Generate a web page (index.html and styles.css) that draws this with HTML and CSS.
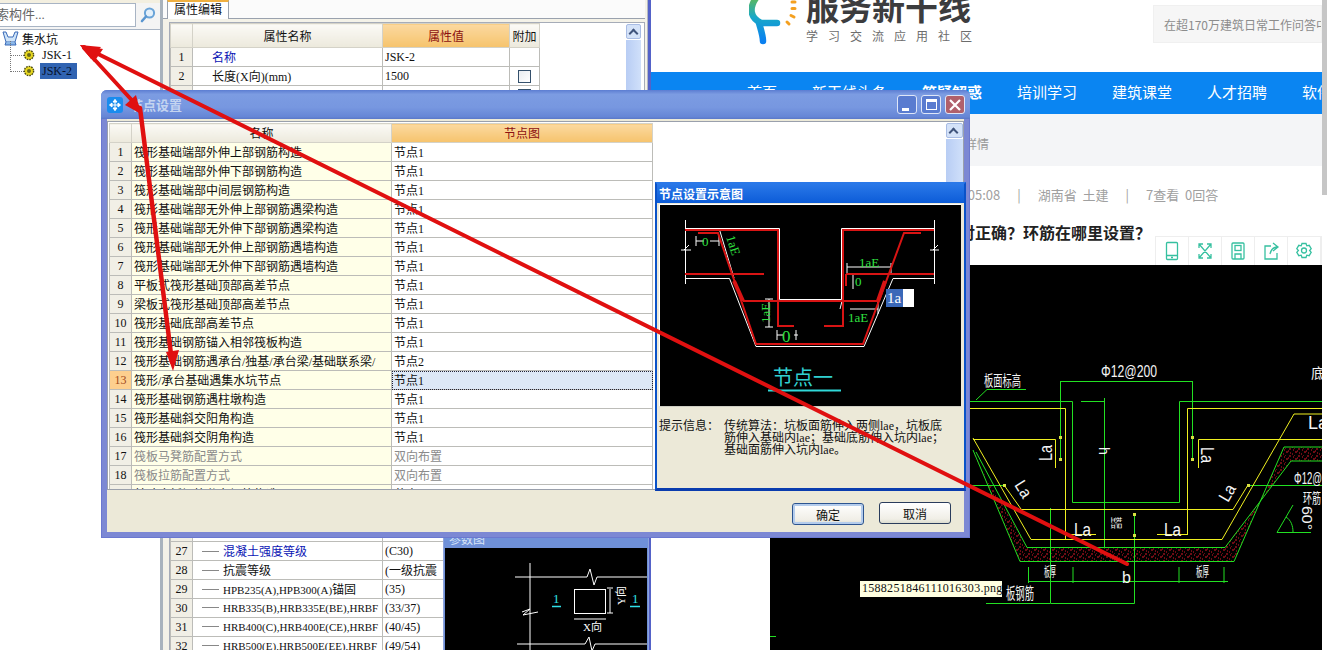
FILE: index.html
```html
<!DOCTYPE html>
<html lang="zh-CN">
<head>
<meta charset="utf-8">
<title>节点设置</title>
<link rel="stylesheet" href="styles.css">
</head>
<body>
<div class="desktop">

  <aside class="tree-panel">
    <div class="search">
      <div class="search-input">搜索构件...</div>
      <div class="search-btn">
        <svg width="18" height="18" viewBox="0 0 18 18"><circle cx="10.5" cy="7" r="4.6" fill="#e4f0fa" stroke="#6aa4d8" stroke-width="2"/><path d="M7 10.5 3 15" stroke="#5a96d0" stroke-width="2.6" stroke-linecap="round"/></svg>
      </div>
    </div>
    <ul class="tree">
      <li class="tree-root">
        <svg width="17" height="15" viewBox="0 0 17 15"><path d="M1 1h3l2 5h5l2-5h3l-3 10H4z" fill="#cfe4f8" stroke="#3a6ab8"/><path d="M4 11 3 14h11l-1-3" fill="#8cb8e8" stroke="#3a6ab8"/></svg>
        <span>集水坑</span>
      </li>
      <li class="tree-leaf">
        <svg class="gear" width="12" height="12" viewBox="0 0 12 12"><circle cx="6" cy="6" r="4.6" fill="#e8d820" stroke="#4a4a10" stroke-width="1.4" stroke-dasharray="1.6 1"/><circle cx="6" cy="6" r="2" fill="#6a6a18"/></svg>
        <span class="leaf-label">JSK-1</span>
      </li>
      <li class="tree-leaf">
        <svg class="gear" width="12" height="12" viewBox="0 0 12 12"><circle cx="6" cy="6" r="4.6" fill="#e8d820" stroke="#4a4a10" stroke-width="1.4" stroke-dasharray="1.6 1"/><circle cx="6" cy="6" r="2" fill="#6a6a18"/></svg>
        <span class="leaf-label leaf-selected">JSK-2</span>
      </li>
    </ul>
  </aside>

  <div class="splitter"></div>

  <section class="props">
    <div class="tab-strip"><div class="tab">属性编辑</div></div>
    <div class="props-frame">
      <table class="grid prop-grid">
        <colgroup><col class="c-no"><col class="c-name"><col class="c-val"><col class="c-add"></colgroup>
        <tr class="head"><th></th><th>属性名称</th><th class="active">属性值</th><th>附加</th></tr>
        <tr><td class="no">1</td><td class="pn link">名称</td><td>JSK-2</td><td></td></tr>
        <tr><td class="no">2</td><td class="pn">长度(X向)(mm)</td><td>1500</td><td class="chk"><i class="box"></i></td></tr>
        <tr><td class="no">3</td><td class="pn"></td><td></td><td class="chk"><i class="box"></i></td></tr>
        <tr class="hidden-rows"><td class="no"></td><td></td><td></td><td></td></tr>
        <tr><td class="no">27</td><td class="sub link"><b class="dash"></b>混凝土强度等级</td><td>(C30)</td><td></td></tr>
        <tr><td class="no">28</td><td class="sub"><b class="dash"></b>抗震等级</td><td>(一级抗震</td><td></td></tr>
        <tr><td class="no">29</td><td class="sub"><b class="dash"></b><span class="tight">HPB235(A),HPB300(A)</span>锚固</td><td>(35)</td><td></td></tr>
        <tr><td class="no">30</td><td class="sub"><b class="dash"></b><span class="tight">HRB335(B),HRB335E(BE),HRBF</span></td><td>(33/37)</td><td></td></tr>
        <tr><td class="no">31</td><td class="sub"><b class="dash"></b><span class="tight">HRB400(C),HRB400E(CE),HRBF</span></td><td>(40/45)</td><td></td></tr>
        <tr><td class="no">32</td><td class="sub"><b class="dash"></b><span class="tight">HRB500(E),HRB500E(EE),HRBF</span></td><td>(49/54)</td><td></td></tr>
      </table>
      <div class="prop-scroll"><div class="scroll-up"></div><div class="scroll-track"></div></div>
    </div>
    <div class="param-panel">
      <div class="param-title">参数图</div>
      <svg class="param-cad" viewBox="445 547 202 103" width="202" height="103">
        <g stroke="#fff" fill="none">
          <path d="M515 576H587L590 568 594 584 597 576H647M530 562V650M517 643H585L589 636 592 650 595 643H647"/>
          <path d="M522 611 530 608 523 614 538 611"/>
          <rect x="574.500" y="588.500" width="31" height="24"/>
          <path d="M574 618H606M610 588V612M607 587H613M607 612H613"/>
        </g>
        <g font-family="'Liberation Serif','Noto Sans CJK SC',serif" font-size="11" fill="#fff">
          <text x="583" y="630">X向</text>
          <text transform="translate(625 604) rotate(-90)">Y向</text>
        </g>
        <g fill="#30e0e8" font-family="'Liberation Serif',serif" font-size="13">
          <text x="553" y="602">1</text>
          <text x="632" y="602">1</text>
        </g>
        <path d="M552 605.500H561M630 605.500H640" stroke="#30e0e8" stroke-width="1.500"/>
      </svg>
    </div>
  </section>

  <div class="edge-strip"></div>

  <main class="browser">
    <header class="site-head">
      <div class="logo">
        <svg class="logo-mark" width="48" height="48" viewBox="0 0 48 48">
          <defs><linearGradient id="lg" x1="0" y1="0" x2="0" y2="1"><stop offset="0" stop-color="#5cb85c"/><stop offset=".45" stop-color="#18a8c8"/><stop offset="1" stop-color="#0a80f0"/></linearGradient></defs>
          <path d="M7 -2C0 8 1 18 12 23H28M10 23C12 30 14 36 14 41" fill="none" stroke="url(#lg)" stroke-width="6.500" stroke-linecap="round"/>
          <g stroke="#f4a020" stroke-width="3" stroke-linecap="round"><path d="M43 2h3M43 8.500h3M42 15.500l3 1.500M38 22l2 2"/></g>
        </svg>
        <div class="logo-text">
          <div class="logo-name">服务新干线</div>
          <div class="logo-sub">学习交流应用社区</div>
        </div>
      </div>
      <div class="site-search">在超170万建筑日常工作问答中</div>
    </header>
    <nav class="site-nav">
      <span>首页</span><span>新干线头条</span><span class="nav-on">答疑解惑</span><span>培训学习</span><span>建筑课堂</span><span>人才招聘</span><span>软件</span>
    </nav>
    <div class="crumbs">问题详情</div>
    <div class="article">
      <div class="meta"><span>2020-04-30 10:05:08</span><em>|</em><span>湖南省&nbsp;&nbsp;土建</span><em>|</em><span>7查看&nbsp;&nbsp;0回答</span></div>
      <div class="title-row">
        <h1 class="q-title">集水坑这样设置节点对正确？环筋在哪里设置？</h1>
      </div>
      <div class="tools-row">
        <div class="tools">
          <div class="tool"><svg width="18" height="20" viewBox="0 0 18 20" class="ti"><rect x="3.500" y="1.500" width="11" height="17" rx="1"/><path d="M3.500 14.500h11M8 16.500h2"/></svg></div>
          <div class="tool"><svg width="18" height="20" viewBox="0 0 18 20" class="ti"><path d="M3 3l12 14M15 3 3 17M3 7V3h4M11 3h4v4M3 13v4h4M15 13v4h-4"/></svg></div>
          <div class="tool"><svg width="18" height="20" viewBox="0 0 18 20" class="ti"><rect x="3" y="2" width="12" height="16" rx="1"/><rect x="6" y="4.500" width="6" height="5"/><path d="M6 18v-5h6v5"/></svg></div>
          <div class="tool"><svg width="18" height="20" viewBox="0 0 18 20" class="ti"><path d="M9 5H3v13h12v-6M11 2l5 4-5 4M16 6c-5 0-7 2-8 7"/></svg></div>
          <div class="tool"><svg width="18" height="20" viewBox="0 0 18 20" class="ti"><path d="M7 2.500h4l.8 2.300 2.400-.5 2 3.400-1.600 1.800 1.600 1.800-2 3.400-2.400-.5-.8 2.300H7l-.8-2.300-2.400.5-2-3.400L3.400 9.500 1.800 7.700l2-3.400 2.400.5z"/><circle cx="9" cy="9.500" r="2.500"/></svg></div>
        </div>
      </div>
      <div class="drawing-row">
        <svg class="drawing" viewBox="769 265 552 385" width="552" height="385">
          <defs>
            <pattern id="dots" width="9" height="7" patternUnits="userSpaceOnUse">
              <path d="M1 1h2M5 2h1M7 4h2M2 5h1M4 6h1M0 3h1M6 0h1" stroke="#d81828" stroke-width="1.200"/>
            </pattern>
          </defs>
          <path d="M972 450 1019 561H1233L1283 447H1321V461H1290L1224 547H1026L975 460Z" fill="url(#dots)"/>
          <g fill="none" stroke="#22e022">
            <path d="M1059 381.500H1191.500M1059.500 381V460M1191.500 381V460"/>
            <path d="M969 401.500H1071.500V502.500H1178.500V401.500H1321M1080 401.500H1103"/>
            <path d="M972 450 1019 561.500H1233L1283 447H1321M975 452 1026 547.500H1224L1290 461H1321"/>
            <path d="M975 400 986 389.500H1025M1103.500 398V548M1049.500 508V603.500H1133.500V513M985 603.500H1049M1027 581.500H1227"/>
            <path d="M1027.500 567V583M1072 567V583M1178 567V583M1223 567V583"/>
            <path d="M969 485.500H1003M1247 485.500H1321M1276 532.500H1310M1276 532.500 1292 505M1285 517C1290 520 1292 526 1292 532M769 636.500H775"/>
          </g>
          <g fill="none" stroke="#f0f020">
            <path d="M969 408.500H1064.500V539M1186.500 534V408.500H1321M972 439.500H1054.500V468M1321 439.500H1197.500V468"/>
            <path d="M972 438 1030 539.500H1221L1293 414H1321M1013 509.500H1232L1247 485M1003 485 1020 509"/>
            <path d="M1065 534.500H1095M1156 534.500H1187"/>
          </g>
          <g fill="#d8e040">
            <rect x="1058" y="436" width="3" height="3"/><rect x="1058" y="458" width="3" height="3"/>
            <rect x="1190" y="436" width="3" height="3"/><rect x="1190" y="458" width="3" height="3"/>
            <rect x="1002" y="484" width="3" height="3"/><rect x="1246" y="484" width="3" height="3"/>
            <rect x="1132" y="513" width="3" height="3"/><rect x="1132" y="534" width="3" height="3"/>
          </g>
          <g class="cad-text">
            <text x="1100" y="377" font-size="17" textLength="56" lengthAdjust="spacingAndGlyphs">Φ12@200</text>
            <text x="983" y="386" font-size="15" textLength="37" lengthAdjust="spacingAndGlyphs">板面标高</text>
            <text x="1073" y="536" font-size="18" textLength="17" lengthAdjust="spacingAndGlyphs">La</text>
            <text x="1163" y="536" font-size="18" textLength="17" lengthAdjust="spacingAndGlyphs">La</text>
            <text x="1307" y="429" font-size="18">La</text>
            <text transform="translate(1051 461) rotate(-90)" font-size="18" textLength="16" lengthAdjust="spacingAndGlyphs">La</text>
            <text transform="translate(1200 447) rotate(90)" font-size="18" textLength="16" lengthAdjust="spacingAndGlyphs">La</text>
            <text transform="translate(1013 485) rotate(58)" font-size="17" textLength="17" lengthAdjust="spacingAndGlyphs">La</text>
            <text transform="translate(1227 503) rotate(-60)" font-size="17" textLength="17" lengthAdjust="spacingAndGlyphs">La</text>
            <text x="1121" y="583" font-size="16">b</text>
            <text x="1043" y="576" font-size="13" textLength="12" lengthAdjust="spacingAndGlyphs">板厚</text>
            <text x="1195" y="576" font-size="13" textLength="13" lengthAdjust="spacingAndGlyphs">板厚</text>
            <text transform="translate(1111 517) rotate(90)" font-size="11" textLength="12" lengthAdjust="spacingAndGlyphs">垫层</text>
            <text transform="translate(1098 447) rotate(90)" font-size="14">h</text>
            <text x="1005" y="599" font-size="16" textLength="28" lengthAdjust="spacingAndGlyphs">板钢筋</text>
            <text x="1293" y="484" font-size="16" textLength="28" lengthAdjust="spacingAndGlyphs">Φ12@</text>
            <text x="1302" y="503" font-size="14" textLength="18" lengthAdjust="spacingAndGlyphs">环筋</text>
            <text x="1310" y="378" font-size="14">底</text>
            <text transform="translate(1301 506) rotate(90)" font-size="14" textLength="24" lengthAdjust="spacingAndGlyphs">60°</text>
          </g>
        </svg>
      </div>
    </div>
  </main>
  <div class="page-scroll"><div class="page-thumb"></div></div>

  <section class="dialog">
    <header class="dlg-title">
      <svg class="dlg-icon" width="16" height="16" viewBox="0 0 16 16"><rect width="16" height="16" rx="3" fill="#1a8cee"/><path d="M8 2.500v11M3 8h10M8 2.500 6 5h4zM8 13.500 6 11h4zM2.500 8 5 6v4zM13.500 8 11 6v4z" stroke="#fff" fill="#fff" stroke-width="1"/></svg>
      <span class="dlg-name">节点设置</span>
      <div class="win-btns">
        <div class="win-btn"><i class="g-min"></i></div>
        <div class="win-btn"><i class="g-max"></i></div>
        <div class="win-btn win-close">
          <svg width="12" height="12" viewBox="0 0 12 12"><path d="M1 1 11 11M11 1 1 11" stroke="#fff" stroke-width="2.200"/></svg>
        </div>
      </div>
    </header>
    <div class="dlg-body">
      <div class="node-frame">
        <table class="grid node-grid">
          <colgroup><col class="n-no"><col class="n-name"><col class="n-val"></colgroup>
          <tr class="head"><th></th><th>名称</th><th class="active">节点图</th></tr>
          <tr><td class="no">1</td><td class="nm">筏形基础端部外伸上部钢筋构造</td><td>节点1</td></tr>
          <tr><td class="no">2</td><td class="nm">筏形基础端部外伸下部钢筋构造</td><td>节点1</td></tr>
          <tr><td class="no">3</td><td class="nm">筏形基础端部中间层钢筋构造</td><td>节点1</td></tr>
          <tr><td class="no">4</td><td class="nm">筏形基础端部无外伸上部钢筋遇梁构造</td><td>节点1</td></tr>
          <tr><td class="no">5</td><td class="nm">筏形基础端部无外伸下部钢筋遇梁构造</td><td>节点1</td></tr>
          <tr><td class="no">6</td><td class="nm">筏形基础端部无外伸上部钢筋遇墙构造</td><td>节点1</td></tr>
          <tr><td class="no">7</td><td class="nm">筏形基础端部无外伸下部钢筋遇墙构造</td><td>节点1</td></tr>
          <tr><td class="no">8</td><td class="nm">平板式筏形基础顶部高差节点</td><td>节点1</td></tr>
          <tr><td class="no">9</td><td class="nm">梁板式筏形基础顶部高差节点</td><td>节点1</td></tr>
          <tr><td class="no">10</td><td class="nm">筏形基础底部高差节点</td><td>节点1</td></tr>
          <tr><td class="no">11</td><td class="nm">筏形基础钢筋锚入相邻筏板构造</td><td>节点1</td></tr>
          <tr><td class="no">12</td><td class="nm">筏形基础钢筋遇承台/独基/承台梁/基础联系梁/</td><td>节点2</td></tr>
          <tr class="sel"><td class="no">13</td><td class="nm">筏形/承台基础遇集水坑节点</td><td>节点1</td></tr>
          <tr><td class="no">14</td><td class="nm">筏形基础钢筋遇柱墩构造</td><td>节点1</td></tr>
          <tr><td class="no">15</td><td class="nm">筏形基础斜交阳角构造</td><td>节点1</td></tr>
          <tr><td class="no">16</td><td class="nm">筏形基础斜交阴角构造</td><td>节点1</td></tr>
          <tr class="off"><td class="no">17</td><td class="nm">筏板马凳筋配置方式</td><td>双向布置</td></tr>
          <tr class="off"><td class="no">18</td><td class="nm">筏板拉筋配置方式</td><td>双向布置</td></tr>
          <tr><td class="no">19</td><td class="nm">基础底板钢筋分布钢筋构造</td><td>节点1</td></tr>
        </table>
        <div class="node-scroll"><div class="scroll-up"></div><div class="scroll-track"></div></div>
      </div>

      <div class="hint-panel">
        <div class="hint-title">节点设置示意图</div>
        <div class="hint-pic">
          <svg viewBox="659 204 301 201" width="301" height="201">
            <g fill="none" stroke="#fff">
              <path d="M684.500 219V283M933.500 219V283"/>
              <path d="M684 227.500H778.500V298.500H840.500V227.500H933M684 277.500H728.500L755 345.500H863L892 277.500H933M718 227 733 277"/>
              <path d="M680 249H690M929 249H938M683 249 688 244M932 249 937 244"/>
              <path d="M695 240H703M709 240H718M695 235V245M718 235V245"/>
              <path d="M846 266H890M846 262V272M890 262V272M849 308H877M839 308 841 300M877 300V313"/>
              <path d="M768 298V326M764 298H772M764 326H772M776 334H782M793 334H797M776 329V339M795 329V339M852 274V288"/>
            </g>
            <g fill="none" stroke="#d81414" stroke-width="2">
              <path d="M684 229H777V325H793M697 232H717L755 343H862L903 232H920M684 273H763M742 300H877M842 229H933M842 228V325H823M845 273H933M845 273V285"/>
            </g>
            <path d="M733 280 742 300M877 300 884 280" stroke="#d81414" stroke-width="4"/>
            <g class="mini-green">
              <text transform="translate(725 236) rotate(72)">1aE</text>
              <text x="701" y="245">0</text>
              <text x="858" y="266">1aE</text>
              <text x="854" y="285">0</text>
              <text transform="translate(769 322) rotate(-90)">1aE</text>
              <text x="781" y="341" font-size="17">0</text>
              <text x="847" y="321">1aE</text>
            </g>
            <rect x="885" y="288" width="28" height="18" fill="#fff"/>
            <rect x="885" y="288" width="17" height="18" fill="#3a68b8"/>
            <text x="886" y="302" fill="#fff" font-family="'Liberation Serif',serif" font-size="15">1a</text>
            <text x="772" y="384" fill="#30d0d0" font-family="'Noto Sans CJK SC',sans-serif" font-size="20">节点一</text>
            <path d="M767 389.500H840" stroke="#30d8d8" stroke-width="2"/>
          </svg>
        </div>
        <div class="hint-info">
          <span class="hint-label">提示信息：</span>
          <p class="hint-copy">传统算法：坑板面筋伸入两侧lae，坑板底筋伸入基础内lae；基础底筋伸入坑内lae；基础面筋伸入坑内lae。</p>
        </div>
      </div>

      <div class="dlg-actions">
        <button class="btn btn-default">确定</button>
        <button class="btn">取消</button>
      </div>
    </div>
  </section>

  <svg class="arrows" viewBox="0 0 1327 650" width="1327" height="650">
    <g stroke="#e01010" stroke-width="4" fill="none" stroke-linecap="round">
      <path d="M84 47 1127 564"/>
      <path d="M84 48 139 108"/>
      <path d="M140 108 172 362" stroke-width="4.500"/>
    </g>
    <g fill="#e01010">
      <path d="M80 45 103 49 94 62Z"/>
      <path d="M80 45 101 47 91 59Z"/>
      <path d="M141 114 125 105 136 95Z"/>
      <path d="M173 371 166 352 179 350Z"/>
    </g>
  </svg>

  <div class="tooltip">1588251846111016303.png</div>
</div>
</body>
</html>
```

FILE: styles.css
```css
* { box-sizing: border-box; }
html, body { margin: 0; padding: 0; background: #fff; }
body {
  font-family: "Liberation Serif", "Noto Sans CJK SC", serif;
  font-size: 12px;
  color: #111;
}
.desktop {
  position: relative;
  display: flex;
  width: 1327px;
  height: 650px;
  overflow: hidden;
}

/* component tree */
.tree-panel { flex: 0 0 160px; background: #fff; }
.search {
  display: flex;
  height: 30px;
  padding-top: 3px;
  background: linear-gradient(#f3efe0 0, #f3efe0 3px, #f4f4f4 3px);
  border-bottom: 1px solid #a8b4c4;
}
.search-input {
  width: 136px;
  height: 24px;
  line-height: 22px;
  text-indent: -17px;
  color: #666;
  font-size: 13px;
  background: #fff;
  border: 1px solid #a8b4c4;
  border-left: 0;
  overflow: hidden;
  white-space: nowrap;
}
.search-btn { display: flex; align-items: center; justify-content: center; width: 24px; height: 24px; }
.tree { list-style: none; margin: 0; padding: 0; }
.tree-root { display: flex; align-items: center; gap: 3px; height: 17px; padding-left: 2px; }
.tree-leaf {
  position: relative;
  display: flex;
  align-items: center;
  height: 16px;
  padding-left: 23px;
}
.tree-leaf::before {
  content: "";
  position: absolute;
  left: 10px;
  top: -6px;
  width: 13px;
  height: 14px;
  border-left: 1px dotted #777;
  border-bottom: 1px dotted #777;
}
.gear { flex: none; margin-right: 5px; position: relative; }
.leaf-label { display: block; padding: 0 2px; height: 16px; line-height: 16px; width: 37px; }
.leaf-selected { background: #3164b2; color: #06122c; }

/* splitter + property window */
.splitter { flex: 0 0 3px; background: #a9b3bd; }
.props {
  position: relative;
  flex: 0 0 485px;
  display: flex;
  flex-direction: column;
  padding: 0 2px 0 0;
  background: #f4f2e8;
  border-right: 1px solid #b4b8c4;
}
.tab-strip { height: 19px; padding-left: 4px; background: #fbfbfb; border-bottom: 1px solid #9aa2ae; }
.tab {
  width: 62px;
  height: 19px;
  line-height: 16px;
  text-align: center;
  background: #fff;
  border: 1px solid #9aa2ae;
  border-top: 2px solid #f0b040;
  border-bottom: 0;
}
.props-frame {
  display: flex;
  flex: 1;
  margin: 3px 0 0 6px;
  background: #fff;
  border: 1px solid #a6acb8;
  border-bottom: 0;
  position: relative;
  overflow: hidden;
}
.grid { border-collapse: collapse; table-layout: fixed; }
.grid th, .grid td {
  height: 19px;
  padding: 0 2px;
  font-weight: normal;
  white-space: nowrap;
  overflow: hidden;
  border: 1px solid #bcbcb8;
  text-align: left;
}
.grid .head th {
  text-align: center;
  background: linear-gradient(#fbfaf6, #ece9dc);
  border-color: #d4d2c8;
}
.grid .head th.active {
  background: linear-gradient(#fbd9a0, #f6c36c);
  color: #8c1010;
}
.grid .no { text-align: center; background: #f1efe6; padding: 0; }
.prop-grid { width: 369px; height: 0; }
.prop-grid .head th { height: 24px; }
.c-no { width: 22px; }
.c-name { width: 190px; }
.c-val { width: 127px; }
.c-add { width: 30px; }
.pn { padding-left: 19px !important; }
.link { color: #0a14b4; }
.chk { text-align: center !important; }
.box {
  display: inline-block;
  width: 13px;
  height: 13px;
  background: linear-gradient(135deg, #e8ecf0, #fff);
  border: 1px solid #34506c;
  vertical-align: middle;
}
.hidden-rows td { height: 437px; }
.dash { display: inline-block; width: 17px; height: 1px; margin: 0 4px 3px 7px; background: #888; vertical-align: middle; }
.tight { font-size: 11px; }
.prop-scroll { position: absolute; left: 456px; top: 1px; width: 15px; height: 100%; }
.scroll-up {
  position: relative;
  height: 15px;
  border: 1px solid #a8bce4;
  border-radius: 2px;
  background: #d4e2f8;
}
.scroll-up::after {
  content: "";
  position: absolute;
  left: 3px;
  top: 5px;
  width: 5px;
  height: 5px;
  border-left: 2px solid #40547c;
  border-top: 2px solid #40547c;
  transform: rotate(45deg);
}
.scroll-track { height: 100%; margin-top: 1px; background: linear-gradient(90deg, #b8cdf4, #d0e0fa); }

.param-panel {
  position: absolute;
  left: 280px;
  top: 535px;
  width: 206px;
  height: 115px;
  background: #6f90d8;
  border: 1px solid #8ea4dc;
  border-bottom: 0;
  padding: 0 1px;
  overflow: hidden;
}
.param-title { height: 12px; line-height: 9px; padding-left: 4px; color: #d8e4f8; }
.param-cad { display: block; background: #000; }

.edge-strip { flex: 0 0 3px; background: #5462c8; }

/* browser page */
.browser {
  flex: 0 0 671px;
  min-width: 0;
  display: flex;
  flex-direction: column;
  font-family: "Noto Sans CJK SC", "Liberation Sans", sans-serif;
  background: #fff;
}
.site-head { display: flex; justify-content: space-between; height: 72px; }
.logo { display: flex; margin-left: 98px; }
.logo-mark { flex: none; margin-right: 9px; }
.logo-text { width: 168px; }
.logo-name {
  margin-top: -12px;
  height: 37px;
  line-height: 37px;
  font-size: 33px;
  font-weight: 700;
  color: #3c3c3e;
  white-space: nowrap;
}
.logo-sub { margin-top: 4px; font-size: 12px; line-height: 14px; letter-spacing: 10px; color: #6c6c6c; white-space: nowrap; }
.site-search {
  width: 169px;
  height: 38px;
  margin-top: 5px;
  padding-left: 10px;
  line-height: 38px;
  font-size: 12px;
  color: #8c8c8c;
  background: #f6f6f6;
  border: 1px solid #f0f0f0;
  white-space: nowrap;
  overflow: hidden;
}
.site-nav {
  display: flex;
  gap: 35px;
  height: 42px;
  padding-left: 96px;
  line-height: 40px;
  font-size: 15px;
  color: #fff;
  background: #0a85f2;
  white-space: nowrap;
  overflow: hidden;
}
.nav-on { font-weight: 700; }
.crumbs {
  height: 52px;
  padding-left: 290px;
  line-height: 60px;
  font-size: 12px;
  color: #999;
  background: #f4f5f7;
  white-space: nowrap;
}
.article { flex: 1; display: flex; flex-direction: column; }
.meta {
  display: flex;
  gap: 17px;
  height: 54px;
  padding: 20px 0 0 229px;
  line-height: 18px;
  font-size: 13px;
  color: #a0a0a0;
  white-space: nowrap;
}
.meta em { font-style: normal; }
.title-row { height: 16px; }
.q-title {
  margin: 0;
  padding-left: 164px;
  font-size: 16px;
  font-weight: 700;
  line-height: 24px;
  color: #222;
  white-space: nowrap;
}
.tools-row { display: flex; justify-content: flex-end; height: 29px; position: relative; z-index: 1; }
.tools { display: flex; background: #fff; border: 1px solid #eeeeee; border-bottom: 0; }
.tool { display: flex; align-items: center; justify-content: center; width: 33px; border-right: 1px solid #eeeeee; }
.ti { fill: none; stroke: #36c0a0; stroke-width: 1.300; }
.drawing-row { padding-left: 119px; }
.drawing { display: block; background: #000; }
.cad-text { fill: #f4f4f4; font-family: "Liberation Sans", "Noto Sans CJK SC", sans-serif; }

.page-scroll { flex: 0 0 5px; background: #fff; }
.page-thumb { height: 195px; background: #c6c6c6; }

/* dialog */
.dialog {
  position: absolute;
  left: 101px;
  top: 90px;
  width: 869px;
  height: 448px;
  display: flex;
  flex-direction: column;
  background: #7c88d4;
  border: 1px solid #6a78d0;
  border-top: 0;
  border-radius: 6px 6px 0 0;
  padding: 0 5px 5px;
}
.dlg-title {
  display: flex;
  align-items: center;
  height: 29px;
  margin: 0 -6px;
  padding: 0 5px;
  border-radius: 6px 6px 0 0;
  background: linear-gradient(#5c7dd2 0, #7c9ce2 15%, #7797e0 60%, #6686d6 92%, #5a78c8 100%);
}
.dlg-icon { flex: none; margin-left: 1px; }
.dlg-name { margin-left: 7px; font-size: 13px; font-weight: 700; color: #c4d4f0; font-family: "Noto Sans CJK SC", sans-serif; }
.win-btns { display: flex; gap: 4px; margin-left: auto; }
.win-btn {
  display: flex;
  align-items: center;
  justify-content: center;
  width: 20px;
  height: 19px;
  background: #5a7cd0;
  border: 1px solid #dfe6f8;
  border-radius: 3px;
}
.win-close { background: #b0606c; }
.g-min { display: block; width: 7px; height: 3px; margin-top: 9px; margin-left: -4px; background: #fff; }
.g-max { display: block; width: 11px; height: 11px; border: 1px solid #fff; border-top-width: 3px; }
.dlg-body {
  position: relative;
  flex: 1;
  display: flex;
  flex-direction: column;
  background: #ece9d8;
}
.node-frame {
  position: relative;
  height: 369px;
  margin-top: 2px;
  background: #fff;
  border: 1px solid #9aa0ac;
  overflow: hidden;
}
.node-grid { width: 543px; margin-top: 1px; margin-left: 1px; }
.n-no { width: 22px; }
.n-name { width: 260px; }
.n-val { width: 261px; }
.nm { background: #ffffe8; }
.sel .no { background: #fdcf8e; color: #a04818; }
.sel td:last-child { background: #dde8f6; outline: 1px dotted #223; outline-offset: -1px; }
.off td { color: #8a8a8a; }
.off .no { color: #111; }
.node-scroll { position: absolute; left: 838px; top: 1px; width: 17px; height: 100%; }
.hint-panel {
  position: absolute;
  left: 548px;
  top: 63px;
  width: 311px;
  height: 309px;
  display: flex;
  flex-direction: column;
  background: #ece9d8;
  border: 2px solid #0a52c8;
  border-top-color: #2a78e8;
  border-bottom-width: 3px;
  border-bottom-color: #0a3cae;
}
.hint-title {
  height: 19px;
  padding-left: 2px;
  line-height: 19px;
  font-weight: 700;
  color: #fff;
  font-family: "Noto Sans CJK SC", sans-serif;
  background: linear-gradient(#2a78e8, #0c5cd8);
}
.hint-pic { margin: 1px 3px 0 2px; border: 1px solid #fff; border-right: 0; border-bottom-color: #cfcfc4; height: 203px; background: #000; }
.hint-pic svg { display: block; background: #000; }
.mini-green { fill: #30e040; font-family: "Liberation Serif", serif; font-size: 13px; }
.hint-info { display: flex; padding: 13px 2px 0; line-height: 12px; }
.hint-label { flex: 0 0 65px; white-space: nowrap; }
.hint-copy { margin: 0; width: 225px; }
.dlg-actions { display: flex; justify-content: flex-end; gap: 15px; padding: 12px 13px 0 0; }
.btn {
  width: 72px;
  height: 22px;
  padding: 0;
  font: 12px "Noto Sans CJK SC", sans-serif;
  color: #111;
  background: linear-gradient(#fff, #f0eee6 80%, #dcdcd0);
  border: 1px solid #2a3c5c;
  border-radius: 3px;
}
.btn-default { border-color: #2c5490; box-shadow: inset 0 0 0 2px #b4ccec; margin-top: 1px; }

/* red annotations + tooltip */
.arrows { position: absolute; left: 0; top: 0; pointer-events: none; }
.tooltip {
  position: absolute;
  left: 860px;
  top: 581px;
  width: 142px;
  height: 16px;
  padding-left: 2px;
  line-height: 15px;
  letter-spacing: .28px;
  background: #ffffe1;
  white-space: nowrap;
}
```
